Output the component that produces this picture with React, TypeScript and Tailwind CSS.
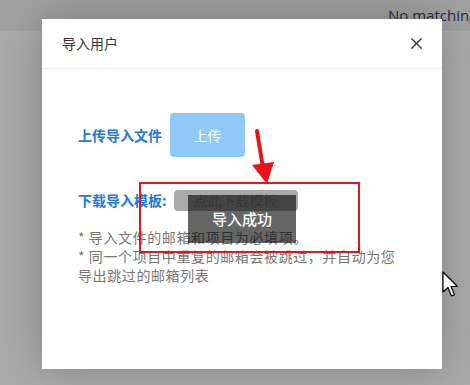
import { X } from "lucide-react";

const font = { fontFamily: '"Noto Sans CJK SC", "Noto Sans", sans-serif' };

function Arrow() {
  return (
    <svg className="pointer-events-none absolute left-0 top-0" width="470" height="385">
      <line x1="257" y1="131" x2="263" y2="168" stroke="#e8131b" strokeWidth="4" strokeLinecap="round" />
      <polygon points="252,165 274,162 267,184" fill="#e8131b" />
    </svg>
  );
}

function Cursor() {
  return (
    <svg className="pointer-events-none absolute left-[442px] top-[271px]" width="18" height="28" viewBox="0 0 18 28">
      <path d="M1 1 L1 21 L6 16.5 L9.5 25 L12.5 23.8 L9 15.5 L15.5 15.5 Z" fill="#fff" stroke="#000" strokeWidth="1.2" strokeLinejoin="round" />
    </svg>
  );
}

export default function App() {
  return (
    <div className="relative h-[385px] w-[470px] overflow-hidden bg-[#ababab]" style={font}>
      <div className="flex h-[31px] items-center overflow-hidden bg-[#a1a1a1] pl-[388px]">
        <span className="whitespace-nowrap text-[15px] text-[#1f2a44]" style={{ fontFamily: '"Open Sans", "Noto Sans", sans-serif' }}>
          No matching
        </span>
      </div>

      <div className="absolute left-[42px] top-[19px] flex h-[350px] w-[400px] flex-col bg-white shadow-[0_0_40px_rgba(0,0,0,0.25)]">
        <div className="flex h-[50px] shrink-0 items-center justify-between border-b border-[#eeeeee] pl-[20px] pr-[16px]">
          <span className="text-[14px] text-[#333333]">导入用户</span>
          <X size={19} strokeWidth={1.7} className="text-[#333]" />
        </div>

        <div className="flex flex-col pl-[36px] pr-[20px] pt-[44px]">
          <div className="flex items-center gap-[8px]">
            <span className="text-[14px] font-bold text-[#1d78e0]">上传导入文件</span>
            <div className="flex h-[44px] w-[75px] items-center justify-center rounded-[4px] bg-[#8dcafa] text-[14px] text-white">
              上传
            </div>
          </div>

          <div className="mt-[33px] flex items-center gap-[7px]">
            <span className="text-[14px] font-bold text-[#1d78e0]">下载导入模板:</span>
            <div className="flex h-[21px] w-[124px] items-center justify-center rounded-[4px] bg-[#aaaaaa] text-[14px] text-[#8a8a8a]">
              点此下载模板
            </div>
          </div>

          <div className="mt-[17px] text-[14px] leading-[19px] tracking-[0.6px] text-[#777777]">
            <p>* 导入文件的邮箱和项目为必填项。</p>
            <p>
              * 同一个项目中重复的邮箱会被跳过，并自动为您
              <br />
              导出跳过的邮箱列表
            </p>
          </div>
        </div>
      </div>

      <div className="absolute left-[188px] top-[195px] flex h-[48px] w-[108px] items-end justify-center bg-black/60 pb-[13px] text-[15px] font-medium text-white">
        导入成功
      </div>

      <div className="pointer-events-none absolute left-[139px] top-[182px] h-[71px] w-[221px] border-2 border-[#e8131b]" />

      <Arrow />
      <Cursor />
    </div>
  );
}
